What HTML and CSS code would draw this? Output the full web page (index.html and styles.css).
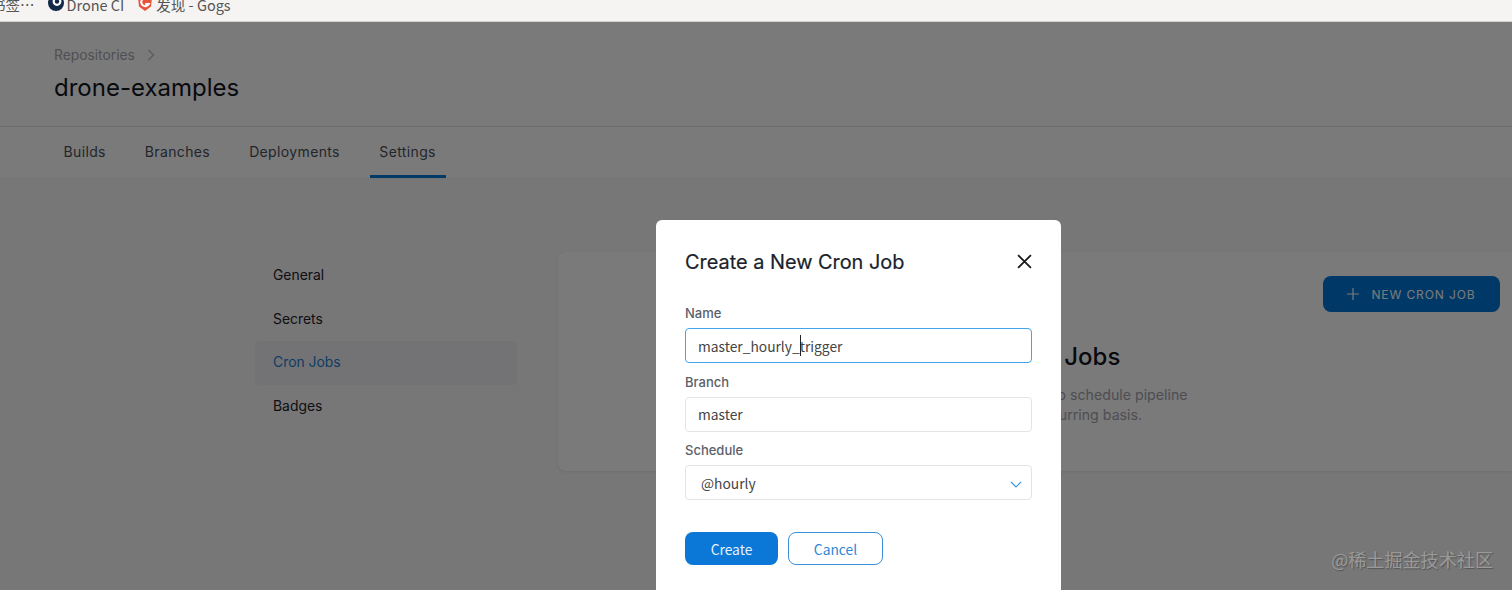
FILE: index.html
```html
<!DOCTYPE html>
<html lang="en">
<head>
    <meta charset="UTF-8">
    <title>Drone CI - Cron Jobs</title>
    <link rel="stylesheet" href="styles.css">
</head>
<body>
    <div class="bookmarks">
        <span class="bookmark bookmark-cut">书签…</span>
        <span class="bookmark">
            <svg class="bookmark-icon" viewBox="0 0 16 16">
                <circle cx="8" cy="8" r="8" fill="#14294a"/>
                <circle cx="9" cy="6.5" r="4.4" fill="#fff"/>
                <circle cx="9" cy="6.5" r="2.2" fill="#14294a"/>
            </svg>
            Drone CI
        </span>
        <span class="bookmark">
            <svg class="bookmark-icon" viewBox="0 0 16 16">
                <path d="M1 2.5 4 0h8l3 2.5-1 9L8 16l-6-4.500z" fill="#e8553c"/>
                <path d="M11 4.200A4 4 0 1 0 11.800 9H8.200" fill="none" stroke="#fff" stroke-width="2"/>
            </svg>
            发现 - Gogs
        </span>
    </div>

    <div class="page">
        <header class="repo-header">
            <div class="breadcrumb">
                <span>Repositories</span>
                <svg class="breadcrumb-arrow" viewBox="0 0 8 12"><path d="M1.500 1l5 5-5 5" fill="none" stroke="currentColor" stroke-width="1.300"/></svg>
            </div>
            <h1>drone-examples</h1>
        </header>

        <nav class="tabs">
            <a class="tab">Builds</a>
            <a class="tab">Branches</a>
            <a class="tab">Deployments</a>
            <a class="tab tab-active">Settings</a>
        </nav>

        <div class="settings">
            <aside class="side-nav">
                <a class="side-link">General</a>
                <a class="side-link">Secrets</a>
                <a class="side-link side-link-active">Cron Jobs</a>
                <a class="side-link">Badges</a>
            </aside>
            <section class="card">
                <div class="card-top">
                    <button class="new-job">
                        <svg class="plus" viewBox="0 0 14 14"><path d="M7 0v14M0 7h14" stroke="currentColor" stroke-width="1.400"/></svg>
                        NEW CRON JOB
                    </button>
                </div>
                <div class="empty">
                    <h2>Add Cron Jobs</h2>
                    <p>You can create cron jobs to schedule pipeline<br>executions on a recurring basis.</p>
                </div>
            </section>
        </div>

        <div class="overlay"></div>

        <div class="modal">
            <div class="modal-head">
                <h3>Create a New Cron Job</h3>
                <svg class="close" viewBox="0 0 14 14"><path d="M1 1l12 12M13 1L1 13" stroke="#1a1a1a" stroke-width="1.700"/></svg>
            </div>
            <label class="field-label">Name</label>
            <div class="input-wrap">
                <input class="input input-focus" type="text" value="master_hourly_trigger">
                <span class="caret"></span>
            </div>
            <label class="field-label">Branch</label>
            <div class="input-wrap">
                <input class="input" type="text" value="master">
            </div>
            <label class="field-label">Schedule</label>
            <div class="input-wrap">
                <select class="input select">
                    <option>@hourly</option>
                </select>
                <svg class="chevron" viewBox="0 0 12 7"><path d="M1 1l5 5 5-5" fill="none" stroke="#3b97e0" stroke-width="1.200"/></svg>
            </div>
            <div class="modal-actions">
                <button class="btn btn-primary">Create</button>
                <button class="btn btn-outline">Cancel</button>
            </div>
        </div>

        <div class="watermark">@稀土掘金技术社区</div>
    </div>
</body>
</html>
```

FILE: styles.css
```css
* {
    box-sizing: border-box;
}
html, body {
    margin: 0;
    height: 590px;
    overflow: hidden;
}
body {
    font-family: Inter, "Noto Sans", sans-serif;
    background-color: #fff;
}
.bookmarks {
    height: 22px;
    display: flex;
    gap: 13px;
    margin-left: -9px;
    background-color: #f5f4f2;
    border-bottom: 1px solid #d2d2d2;
    overflow: hidden;
    font-family: "Noto Sans CJK SC", sans-serif;
    font-size: 14.500px;
    line-height: 10px;
    color: #555;
}
.bookmark {
    display: flex;
    gap: 3px;
    height: 12px;
}
.bookmark-icon {
    width: 16px;
    height: 16px;
    margin-top: -5px;
}
.page {
    position: relative;
    height: 568px;
    overflow: hidden;
}
.repo-header {
    height: 105px;
    padding: 24px 54px 0;
    border-bottom: 1px solid #e4e4e8;
}
.breadcrumb {
    display: flex;
    align-items: center;
    gap: 12px;
    height: 18px;
    font-size: 13.8px;
    color: #a8a8ae;
}
.breadcrumb-arrow {
    width: 8px;
    height: 12px;
    color: #bcbcc2;
}
h1 {
    margin: 10px 0 0;
    font-size: 24px;
    line-height: 28px;
    font-weight: 400;
    color: #12161f;
}
.tabs {
    height: 52px;
    display: flex;
    gap: 20px;
    padding-left: 54px;
    border-bottom: 1px solid #f2f2f5;
    box-shadow: 0 2px 4px rgba(0,0,0,0.03);
}
.tab {
    padding: 0 9.500px;
    line-height: 50px;
    font-size: 14px;
    letter-spacing: 0.36px;
    color: #4a4f5c;
}
.tab-active {
    height: 51px;
    margin-left: 0.5px;
    padding-right: 10px;
    border-bottom: 3px solid #007ad8;
    border-radius: 3px 3px 0 0;
}
.settings {
    display: flex;
    align-items: flex-start;
    gap: 41px;
    padding: 73px 0 0 255px;
    height: 411px;
    background-color: #f8f8fa;
}
.side-nav {
    width: 262px;
    padding-top: 2px;
    display: flex;
    flex-direction: column;
}
.side-link {
    height: 43.700px;
    line-height: 43.700px;
    padding-left: 18px;
    font-size: 13.900px;
    color: #1f222a;
}
.side-link-active {
    color: #1f7fd0;
    background-color: #f1f1f7;
    border-radius: 4px;
}
.card {
    flex: 1;
    height: 219px;
    background-color: #fff;
    border-radius: 8px 0 0 8px;
    box-shadow: 0 1px 3px rgba(0,0,0,0.08);
}
.card-top {
    display: flex;
    justify-content: flex-end;
    padding: 24px 12px 0 0;
}
.new-job {
    width: 177px;
    height: 36px;
    display: flex;
    align-items: center;
    justify-content: center;
    gap: 12px;
    border: none;
    border-radius: 8px;
    background-color: #0078d8;
    color: #fff;
    font-family: Inter, sans-serif;
    font-size: 12px;
    letter-spacing: 0.9px;
}
.plus {
    width: 12px;
    height: 12px;
}
.empty {
    margin-top: 31px;
    text-align: center;
}
h2 {
    margin: 0;
    font-size: 24px;
    line-height: 28px;
    font-weight: 500;
    color: #12161f;
}
.empty p {
    margin: 14px 0 0;
    font-size: 14.200px;
    line-height: 20px;
    color: #a4a4ac;
}
.overlay {
    position: absolute;
    inset: 0;
    background-color: rgba(0,0,0,0.52);
}
.modal {
    position: absolute;
    left: 656px;
    top: 198px;
    width: 405px;
    height: 420px;
    padding: 29px 29px 0 29px;
    background-color: #fff;
    border-radius: 6px;
}
.modal-head {
    display: flex;
    justify-content: space-between;
    align-items: center;
    height: 26px;
    margin-bottom: 29px;
}
h3 {
    margin: 0;
    font-size: 19.900px;
    font-weight: 400;
    -webkit-text-stroke: 0.2px #1a1f2b;
    color: #1a1f2b;
}
.close {
    width: 15px;
    height: 15px;
    margin-top: -2px;
}
.field-label {
    display: block;
    height: 18px;
    line-height: 18px;
    font-size: 13px;
    font-weight: 500;
    color: #5a5f6b;
}
.input-wrap {
    position: relative;
    height: 35px;
    margin: 6px 0 9.500px;
}
.input {
    display: block;
    width: 100%;
    height: 100%;
    padding: 0 12px;
    border: 1px solid #e4e4e8;
    border-radius: 4px;
    background-color: #fff;
    font-family: "Noto Sans CJK SC", sans-serif;
    font-size: 13.800px;
    color: #444;
    outline: none;
}
.input-focus {
    border-color: #42a5ea;
}
.select {
    appearance: none;
    padding-left: 15px;
}
.caret {
    position: absolute;
    left: 115px;
    top: 7px;
    width: 1px;
    height: 21px;
    background-color: #222;
}
.chevron {
    position: absolute;
    right: 10px;
    top: 16px;
    width: 12px;
    height: 7px;
}
.modal-actions {
    display: flex;
    gap: 10px;
    margin-top: 32px;
}
.btn {
    height: 33px;
    border-radius: 8px;
    font-family: "Noto Sans CJK SC", sans-serif;
    font-size: 13.800px;
    cursor: pointer;
}
.btn-primary {
    width: 93px;
    border: none;
    background-color: #0b78d7;
    color: #e6f2fc;
}
.btn-outline {
    width: 95px;
    border: 1px solid #3b8fd8;
    background-color: #fff;
    color: #2f86d6;
}
.watermark {
    position: absolute;
    right: 19px;
    top: 524px;
    font-family: "Noto Sans CJK SC", sans-serif;
    font-size: 18.100px;
    color: #9a9a9a;
    text-shadow: 1px 1px 1px #555;
}
```
